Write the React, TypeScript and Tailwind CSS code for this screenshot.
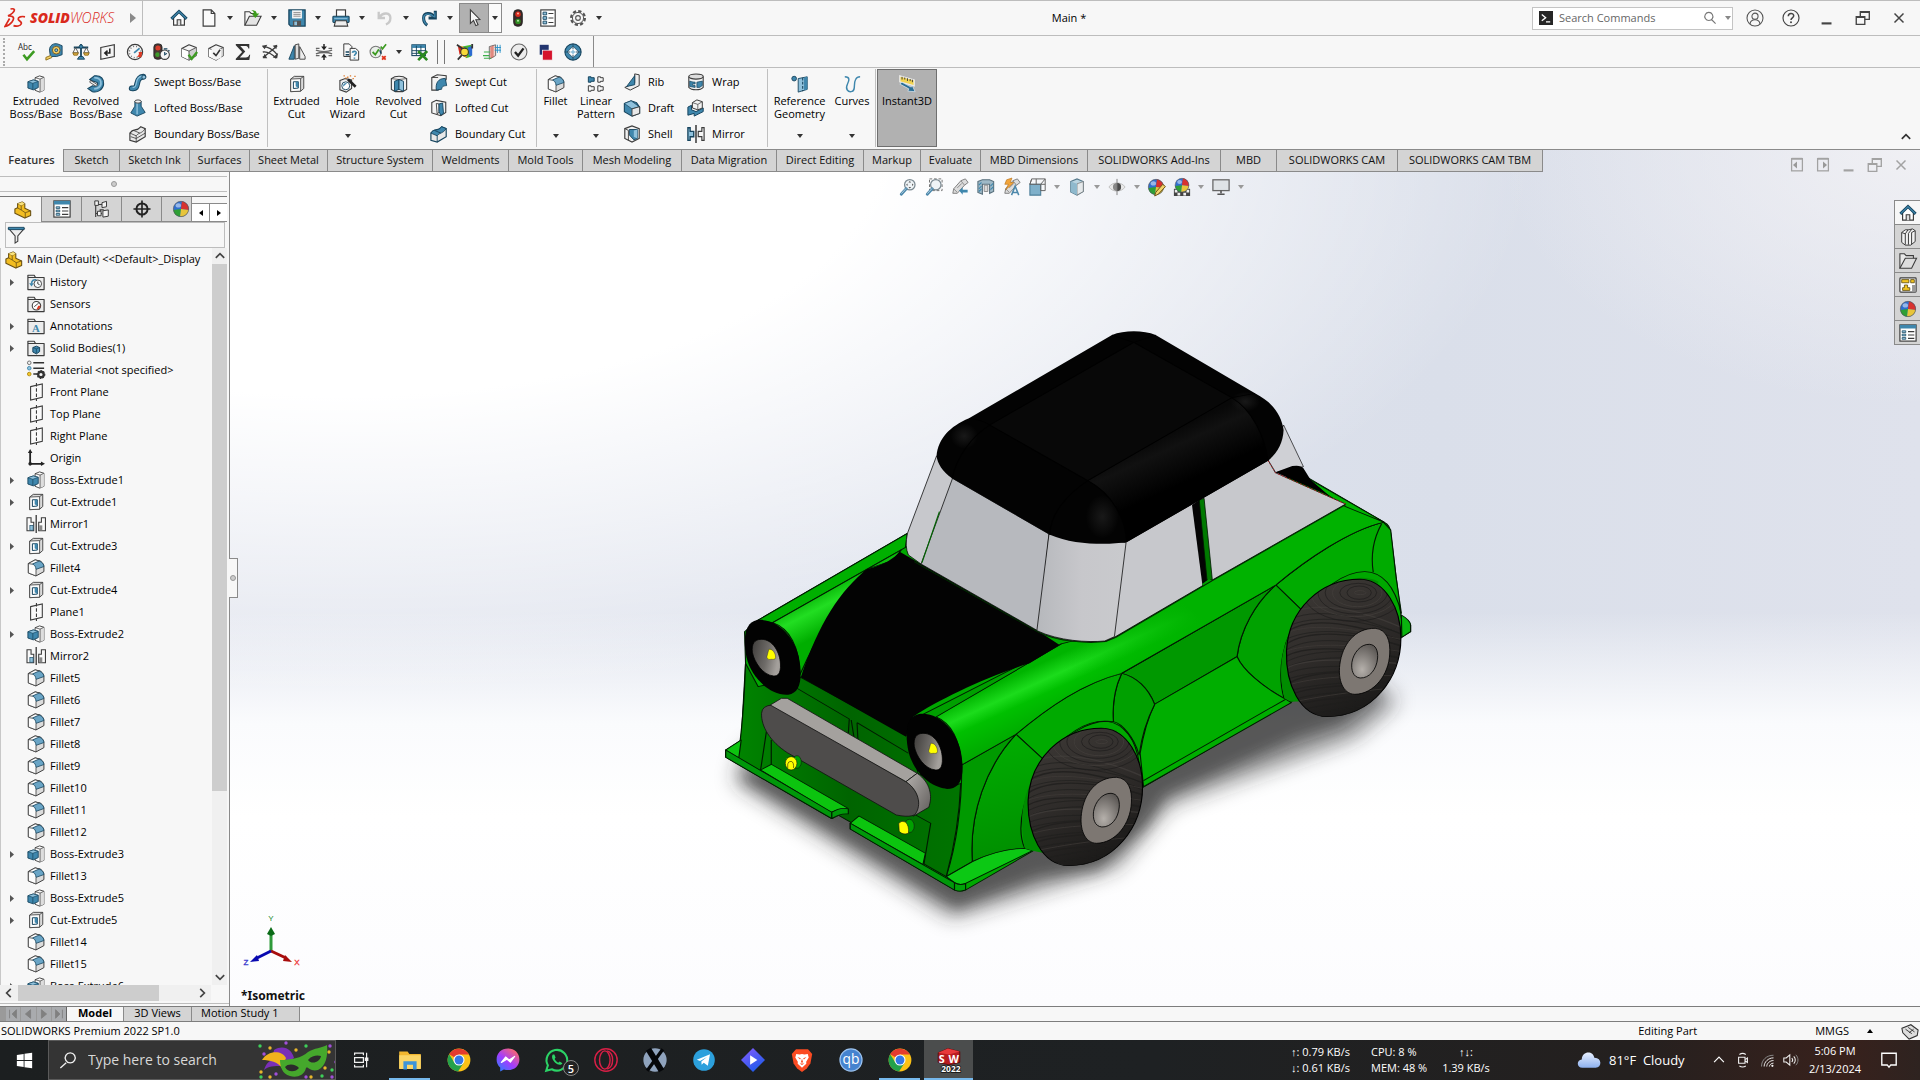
import React from "react";

type IconProps = { name: string; className?: string };

const B = "#3f87ad";
const L = "#8fc1dc";
const D = "#16445e";
const K = "#3c3c3c";

const cube = (
  <>
    <path d="M2 6 L10 2 L18 5 V14 L10 19 L2 15 Z" fill="#f4f4f4" stroke={K} strokeWidth="1.3" strokeLinejoin="round" />
    <path d="M2 6 L10 9 V19 L2 15 Z" fill="#fff" />
    <path d="M10 9 L18 5 V14 L10 19 Z" fill="#cfcfcf" />
    <path d="M2 6 L10 9 L18 5 M10 9 V19" fill="none" stroke={K} strokeWidth="0.9" />
  </>
);

const folder = (
  <path d="M1 18.4 V2.5 H8 L9.5 5 H19 V18.4 Z M1 5 H9.5" fill="#ececec" stroke={K} strokeWidth="1.3" strokeLinejoin="round" />
);

const sphere = (
  <>
    <circle cx="10" cy="10" r="8.5" fill="#2f6fd0" />
    <path d="M10 10 L11 1.5 A8.5 8.5 0 0 1 18.5 11 Z" fill="#d8322f" />
    <path d="M10 10 L1.6 11 A8.5 8.5 0 0 0 9 18.4 Z" fill="#2fa036" />
    <path d="M10 10 L18.5 11 A8.5 8.5 0 0 1 9 18.4 Z" fill="#e8c53a" />
    <ellipse cx="7" cy="6" rx="3" ry="2.4" fill="#fff" opacity="0.5" />
    <circle cx="10" cy="10" r="8.5" fill="none" stroke="#555" strokeWidth="0.7" />
  </>
);

const lens = (
  <>
    <circle cx="12" cy="7.5" r="5.8" fill="#eef3f6" stroke="#7c8a92" strokeWidth="1.4" />
    <path d="M8 12 L2.5 18" stroke="#4d88ab" strokeWidth="3.2" strokeLinecap="round" />
    <path d="M7.5 12 L3 17" stroke="#b5d4e4" strokeWidth="1" strokeLinecap="round" />
  </>
);

const torch = (
  <>
    <path d="M11 3 L16 1 L19 5 L15 8 L7 17 L2 17 L3 12 Z" fill="#dcdcdc" stroke="#777" strokeWidth="1" />
    <path d="M11 3 L15 8 M3 12 L7 16 M12 6 L7 11" stroke="#888" fill="none" />
  </>
);

const chrome = (
  <>
    <circle cx="10" cy="10" r="9.5" fill="#fbc116" />
    <path d="M10 10 L1.8 5.2 A9.5 9.5 0 0 1 18.3 5.5 L10 5.5 Z" fill="#e33b2e" />
    <path d="M1.8 5.2 A9.5 9.5 0 0 0 9.2 19.5 L13.9 12.2 L10 10 L6 11.8 Z" fill="#23a14b" />
    <circle cx="10" cy="10" r="4.6" fill="#fff" />
    <circle cx="10" cy="10" r="3.7" fill="#3477e4" />
  </>
);

const icons: Record<string, React.ReactNode> = {
  home: (
    <>
      <path d="M4 9 V18 H16 V9 L10 3 Z" fill="#fff" stroke={K} strokeWidth="1.3" />
      <path d="M8 18 V12 H12 V18" fill="#ddd" stroke={K} strokeWidth="1.2" />
      <path d="M1.5 11 L10 2.8 L18.5 11" fill="none" stroke={D} strokeWidth="3.2" />
      <path d="M1.8 10.7 L10 2.9 L18.2 10.7" fill="none" stroke={B} strokeWidth="1.4" />
    </>
  ),
  doc: <path d="M3.5 1 H12.5 L16.5 5 V19 H3.5 Z M12.5 1 V5 H16.5" fill="#fafafa" stroke={K} strokeWidth="1.3" />,
  open: (
    <>
      <path d="M1 18 V3 H6 L8 5 H13 V8" fill="#f4f4f4" stroke={K} strokeWidth="1.2" />
      <path d="M1 18 L6 8 H19 L14 18 Z" fill="#e4e4e4" stroke={K} strokeWidth="1.2" />
      <path d="M8 1 C12 1 14 3 14 5 H17 L12.5 10 L8.5 5 H11 C11 3 10 2 8 1 Z" fill="#3c9c1c" />
    </>
  ),
  save: (
    <>
      <path d="M1 1 H19 V19 H3 L1 17 Z" fill={B} stroke={D} strokeWidth="1.4" />
      <rect x="4.5" y="1.5" width="11" height="9" fill="#f4f4f4" />
      <path d="M6 4 H14 M6 6 H14 M6 8 H14" stroke="#888" />
      <rect x="5.5" y="13" width="9" height="6" fill="#555" />
      <rect x="7" y="14" width="3" height="4" fill={L} />
    </>
  ),
  print: (
    <>
      <rect x="5" y="1" width="10" height="9" fill="#fff" stroke={K} strokeWidth="1.3" />
      <rect x="1" y="8" width="18" height="7" rx="1" fill={B} stroke={D} strokeWidth="1.2" />
      <path d="M4 13 H16 L17.5 19 H2.5 Z" fill="#eee" stroke={K} strokeWidth="1.2" />
      <path d="M2.5 10.5 H17" stroke={L} />
    </>
  ),
  undo: <path d="M3 3 L3 10 L10 10 M4 9 C8 3 16 4 16 10 C16 14 14 16 11 17" fill="none" stroke="#c9c9c9" strokeWidth="2.6" />,
  redo: (
    <>
      <path d="M17 2 V10 H9.5 M16 9 C12 3 4 4 4 10 C4 14 5 16 8 18" fill="none" stroke={D} strokeWidth="3.4" />
      <path d="M16.5 3.5 V9.4 M15.5 8.8 C11.5 4 4 5 4 10 C4 14 5 15.5 7.4 17.2" fill="none" stroke={B} strokeWidth="1.5" />
    </>
  ),
  cursor: <path d="M6 1 L6 16 L9.5 12.7 L12 18.5 L14.5 17.4 L12 11.9 L16.5 11.6 Z" fill="#f6f6f6" stroke={K} strokeWidth="1.2" />,
  traffic: (
    <>
      <rect x="5.2" y="0.8" width="9.6" height="18.4" rx="4.2" fill="#3a2a28" stroke="#222" />
      <circle cx="10" cy="5.8" r="3" fill="#d92b1c" />
      <circle cx="10" cy="5" r="1.2" fill="#ffb0a0" />
      <circle cx="10" cy="13.8" r="3" fill="#2f8c22" />
      <circle cx="10" cy="13" r="1.1" fill="#b6e8a6" />
    </>
  ),
  list: (
    <>
      <rect x="2" y="1" width="16" height="18" fill="#fff" stroke={K} strokeWidth="1.3" />
      <path d="M4.5 3.5 h4 v3 h-4z M4.5 8.5 h4 v3 h-4z M4.5 13.5 h4 v3 h-4z" fill={L} stroke={D} />
      <path d="M10.5 5 H16 M10.5 10 H16 M10.5 15 H16" stroke={K} strokeWidth="1.2" />
    </>
  ),
  gear: (
    <>
      <circle cx="10" cy="10" r="7.6" fill="none" stroke="#555" strokeWidth="2.6" strokeDasharray="3.6 2.37" />
      <circle cx="10" cy="10" r="6.2" fill="#f7f7f7" stroke="#555" strokeWidth="1.1" />
      <circle cx="10" cy="10" r="2.6" fill="none" stroke="#555" strokeWidth="1.2" />
    </>
  ),
  spell: (
    <>
      <text x="0" y="8" fontSize="9" fill="#222" fontFamily="Open Sans, sans-serif">Abc</text>
      <path d="M6 13 L10 18 L18 9" fill="none" stroke="#3d9b22" strokeWidth="2.8" />
    </>
  ),
  tape: (
    <>
      <path d="M5 8 C5 2 10 0 14 1 L19 3 V13 L13 15 H6 Z" fill={B} stroke={D} />
      <circle cx="12.5" cy="8" r="4.3" fill="#f4cf63" stroke="#6b5320" />
      <circle cx="12.5" cy="8" r="1.6" fill={L} stroke={D} />
      <path d="M6 14 L1 16 V19 L8 16" fill="#f4cf63" stroke="#8a6a16" />
    </>
  ),
  scale: (
    <>
      <path d="M10 1 V16 M2 5 H18" stroke={D} strokeWidth="2" />
      <path d="M6 18 H14 L12 15 H8 Z" fill={B} stroke={D} />
      <circle cx="10" cy="4" r="2" fill={B} stroke={D} />
      <path d="M4 5 L1 11 H7 Z M16 5 L13 11 H19 Z" fill="none" stroke="#555" />
      <path d="M1 11 H7 L6 13.5 H2 Z M13 11 H19 L18 13.5 H14 Z" fill="#e7b54c" stroke="#8a6a16" />
    </>
  ),
  section: (
    <>
      <path d="M2 5 L17 2 V15 L2 18 Z" fill="#f4f4f4" stroke={K} strokeWidth="1.3" />
      <path d="M12 6 V11 H7 M9.5 8.5 L6.5 11.2 L9.5 14" fill="none" stroke="#222" strokeWidth="1.7" />
    </>
  ),
  gauge: (
    <>
      <circle cx="10" cy="10" r="8.4" fill="#f6f6f6" stroke={K} strokeWidth="1.4" />
      <circle cx="10" cy="10" r="6.2" fill="none" stroke="#666" strokeWidth="1.4" strokeDasharray="1 2.3" />
      <path d="M9 11 L15 6" stroke={B} strokeWidth="2" />
      <path d="M14 10 A4 4 0 0 1 12 15 L17 16 L18 10 Z" fill="#df3a24" />
    </>
  ),
  lightclock: (
    <>
      <rect x="1" y="1" width="9" height="17" rx="3.5" fill="#4a3632" stroke="#222" />
      <circle cx="5.5" cy="5.5" r="2.8" fill="#d93d2b" />
      <circle cx="5" cy="13" r="2.6" fill="#3e9a2b" />
      <circle cx="13" cy="13" r="5.2" fill="#f6f6f6" stroke={K} strokeWidth="1.2" />
      <path d="M13 10 V13 L15.5 11.5 M12 6.5 H16 M17 8 L18.5 9" stroke={D} strokeWidth="1.2" fill="none" />
    </>
  ),
  cubecheck: (
    <>
      {cube}
      <path d="M9.5 13 L13 17.5 L19 10" fill="none" stroke="#3d9b22" strokeWidth="2.6" />
    </>
  ),
  cubetick: (
    <>
      {cube}
      <path d="M5 6.5 H16 V16 L10 19 L5 16.5Z" fill="#f4f4f4" />
      <path d="M7 11 L10 14 L14.5 7.5" fill="none" stroke="#333" strokeWidth="1.8" />
    </>
  ),
  sigma: <path d="M2 1 H17 V6 H16 C15.5 4 14.5 3.4 12 3.4 H7 L12.5 9.5 L6.5 16 H13 C15.5 16 16.2 15 17 13 H18 L17 19 H2 V17.5 L9 10 L2 2.5 Z" fill="#333" />,
  zebra: (
    <>
      <path d="M2 4 C8 4 14 8 18 13 M2 10 C7 9 13 13 17 17 M18 3 C12 8 7 13 2 16" fill="none" stroke={K} strokeWidth="1.5" />
      <path d="M1 3 L7 2 L4 7 Z M18 2 L13 3 L17 7 Z M2 17 L4 12 L7 17 Z M19 11 L18 17 L13 16 Z" fill={K} />
    </>
  ),
  sym: (
    <>
      <path d="M1 18 L7 3 V18 Z" fill={B} stroke={D} />
      <path d="M8 2 L12 1 V17 L8 18 Z" fill="#ddd" stroke={K} />
      <path d="M13 18 V4 L19 15 V18 Z" fill="#eee" stroke={K} />
    </>
  ),
  thick: (
    <>
      <path d="M1 8 C6 10 14 10 19 8 M1 12 C6 10 14 10 19 12 M1 6 H5 M15 6 H19 M1 14 H5 M15 14 H19" fill="none" stroke="#666" strokeWidth="1.5" />
      <path d="M10 1 V5 M10 15 V19" stroke="#222" strokeWidth="1.6" />
      <path d="M6.8 4 H13.2 L10 8 Z M6.8 16 H13.2 L10 12 Z" fill="#222" />
    </>
  ),
  compare: (
    <>
      <path d="M2 1 H8 L11 4 V15 H2 Z" fill="#f8f8f8" stroke={K} strokeWidth="1.1" />
      <path d="M9 6 H15 L18.5 9 V19 H9 Z" fill="#f8f8f8" stroke={K} strokeWidth="1.1" />
      <path d="M4 10 H8 M4 13 H8" stroke={D} strokeWidth="1.6" />
      <path d="M11.5 10.8 C12 8.6 16 8.8 15.8 11 C15.6 12.5 13.8 12.4 13.8 14.4 M13.8 16 V17.5" fill="none" stroke={B} strokeWidth="1.8" />
    </>
  ),
  checkx: (
    <>
      <circle cx="7.5" cy="10" r="6.3" fill="#e9efe9" stroke="#777" strokeWidth="1.2" />
      <path d="M4 10 L7 13 L11 7" fill="none" stroke="#3d9b22" strokeWidth="2" />
      <path d="M13 4 L15 6.5 L19 1.5" fill="none" stroke="#3d9b22" strokeWidth="1.8" />
      <path d="M12 8 L13.5 12" stroke={D} strokeWidth="1.6" />
      <path d="M14.5 14.5 L18.5 18.5 M18.5 14.5 L14.5 18.5" stroke="#e0331c" strokeWidth="2" />
    </>
  ),
  xls: (
    <>
      <rect x="1" y="2" width="15" height="12" fill="#fff" stroke={D} strokeWidth="1.2" />
      <rect x="1" y="2" width="15" height="3.5" fill={B} />
      <path d="M1 8.5 H16 M1 11.5 H16 M6 3 V14 M11 3 V14" stroke={D} />
      <path d="M8 9 L18 19 M18 9 L8 19" stroke="#2a8a1e" strokeWidth="3" />
    </>
  ),
  rainbow: (
    <>
      <path d="M7 4 L17 2 V15 L11 17 Z" fill="#45b534" />
      <path d="M5 3 C9 4 12 7 12 16 L8 15 L5 8 Z" fill="#f59b1b" />
      <path d="M2 3 L7 5 L9 10 L4 13 Z" fill="#d32a1d" />
      <path d="M13 5 L18 3 V14 L15 15 Z" fill="#2b6bd0" />
      <circle cx="9.5" cy="10" r="4.3" fill="#f7d93a" stroke="#333" strokeWidth="1.2" />
      <path d="M6.5 13.5 L2 18.5 M1 2 L7 6 M18 1 V6" stroke="#333" strokeWidth="2" />
    </>
  ),
  flow: (
    <>
      <path d="M7 4 L14 2 V14 L7 18 Z" fill="#f2d4cf" stroke="#666" />
      <path d="M9 4 V17 M11 3 V16" stroke="#d24a3a" />
      <path d="M13 5 H20 M13 8 H20 M16 2 V11 M19 2 V11" stroke="#2790c7" />
      <path d="M1 10 H8 M0 14 H7 M1 17 H9" stroke="#3bb04a" strokeWidth="1.2" />
    </>
  ),
  okring: (
    <>
      <circle cx="10" cy="10" r="8.8" fill="#ececec" stroke="#666" strokeWidth="1.2" />
      <path d="M5.5 10 L9 14 L15 6" fill="none" stroke="#222" strokeWidth="2.6" />
    </>
  ),
  squares: (
    <>
      <rect x="3" y="2" width="10" height="11" fill="#23356f" />
      <rect x="6" y="8" width="11" height="11" fill="#d5132c" stroke="#f7f7f7" strokeWidth="0.8" />
    </>
  ),
  target: (
    <>
      <circle cx="10" cy="10" r="9" fill={B} stroke={D} strokeWidth="1.2" />
      <path d="M10 1 V19 M1 10 H19" stroke={D} strokeWidth="0.8" />
      <path d="M10 3.6 L16.4 10 L10 16.4 L3.6 10 Z" fill="#fff" stroke={D} strokeWidth="0.8" />
      <path d="M10 7.4 L12.6 10 L10 12.6 L7.4 10 Z" fill={L} />
      <path d="M10 3.6 V7 M10 13 V16.4 M3.6 10 H7 M13 10 H16.4" stroke={D} strokeWidth="1" />
    </>
  ),
  boss: (
    <>
      <path d="M9 3 L14 1 L18.8 2.5 V17 L14 19 L9 17 Z" fill="#fbfbfb" stroke={K} strokeWidth="1" />
      <path d="M14.5 4.2 L18.8 2.5 V17 L14.5 18.8 Z" fill="#dedede" />
      <path d="M14.5 4.5 V19 M9 3 L14.5 4.5 L18.8 2.5" fill="none" stroke={K} strokeWidth="0.8" />
      <path d="M1 7.5 L7 5.5 L12.5 7 V14 L7 16.5 L1 14.5 Z" fill={B} stroke={D} strokeWidth="1" />
      <path d="M1 7.5 L7 5.5 L12.5 7 L6.5 9.2 Z" fill={L} stroke={D} strokeWidth="0.7" />
      <path d="M6.5 9.2 V16.2" stroke={D} strokeWidth="0.8" />
    </>
  ),
  revolve: (
    <>
      <path d="M8 1 C16 0 19 5 18.5 10 C18 16 12 20 6 18.5 L1 15 L6 12 C9 13 12 11 12 9 C11 7 7 8 3 5 Z" fill={B} stroke={D} strokeWidth="1.2" />
      <path d="M8 3 C14 3 16 6 15.5 10 C15 13 12 15 8 15.5" fill="none" stroke={L} strokeWidth="2" />
      <path d="M4 6 L12 11 L10 12.5 L3 8 Z" fill="#f4f4f4" stroke={K} strokeWidth="0.9" />
    </>
  ),
  sweep: (
    <>
      <path d="M3 17 C13 19 5 5 16 4" fill="none" stroke={D} strokeWidth="6.4" strokeLinecap="round" />
      <path d="M3 17 C13 19 5 5 16 4" fill="none" stroke={B} strokeWidth="4.2" strokeLinecap="round" />
      <path d="M4 16 C11 17 5 5 14 3.5" fill="none" stroke={L} strokeWidth="1.3" />
      <circle cx="16.5" cy="4.6" r="2.2" fill={L} stroke={D} />
    </>
  ),
  loft: (
    <>
      <path d="M6.5 2.5 V8 L2 15.5 L9 19 L18 15 L13.5 8 V2.5 Z" fill={B} stroke={D} strokeWidth="1" />
      <path d="M9 4 V17" stroke={L} strokeWidth="1.6" />
      <ellipse cx="10" cy="2.8" rx="3.5" ry="1.8" fill="#f2f2f2" stroke={K} />
    </>
  ),
  boundary: (
    <>
      <path d="M1 9 C5 3 8 8 13 2 L18 4 V13 L8 19 L1 17 Z" fill="#e8e8e8" stroke={K} strokeWidth="1.3" />
      <path d="M1 9 L8 12 C11 8 14 10 18 4 M8 12 V19 M5 6 L12 9 M2 13 L8 15 L18 9" fill="none" stroke={K} strokeWidth="0.9" />
    </>
  ),
  boundarycut: (
    <>
      <path d="M1 9 C5 3 8 8 13 2 L18 4 V13 L8 19 L1 17 Z" fill="#e8e8e8" stroke={D} strokeWidth="1.3" />
      <path d="M1 9 C5 3 8 8 13 2 L18 4 C14 10 11 8 8 12 Z" fill={B} stroke={D} />
      <path d="M8 12 V19 M5 6 L12 9" fill="none" stroke={D} />
    </>
  ),
  cut: (
    <>
      <path d="M3 4.5 L7 1.5 L17.5 1.5 V15 L14 18 L3 18.5 Z" fill="#dadada" stroke={K} strokeWidth="1" />
      <path d="M3 4.5 L14 4 V18 L3 18.5 Z" fill="#fbfbfb" stroke={K} strokeWidth="0.9" />
      <path d="M14 4 L17.5 1.5" stroke={K} strokeWidth="0.9" />
      <path d="M6 7.5 H11.5 V14.5 L6 15 Z" fill="#fff" stroke={D} strokeWidth="1.1" />
      <path d="M8.5 7.5 H11.5 V14.5 L8.5 12.5 Z" fill={B} />
    </>
  ),
  hole: (
    <>
      <path d="M1 6 L7 4 L14 5.5 V15 L8 19 L1 16.5 Z" fill="#eee" stroke={K} strokeWidth="1.2" />
      <circle cx="7.5" cy="12" r="4.4" fill="#fff" stroke={D} />
      <path d="M4.6 13 A3.4 3.4 0 0 1 9 9 Z" fill={B} />
      <path d="M10 5 L18.5 13" stroke="#222" strokeWidth="3" />
      <path d="M5 1 h1.5 M9 2.5 h1.5 M12 1 h1.5 M15 4 h1.5 M7 3.5 h1.5 M17 1.5 h1.5" stroke="#dd7b2d" strokeWidth="1.6" />
    </>
  ),
  revcut: (
    <>
      <path d="M1.5 4 C6 0.5 14 0.5 18.5 4 V16 L14 18.5 H6 L1.5 16 Z" fill="#f2f2f2" stroke={K} strokeWidth="1.2" />
      <path d="M5 7 L10 5 V16 L5 18 Z" fill={B} stroke={D} />
      <path d="M10 5 L15 7 V18 L10 16 Z" fill={L} stroke={D} />
      <path d="M1.5 4 L10 5 L18.5 4" fill="none" stroke={K} strokeWidth="0.8" />
    </>
  ),
  sweepcut: (
    <>
      <path d="M2 5 L8 2 L18 3 V7 L9 19 H2 Z" fill="#f2f2f2" stroke={K} strokeWidth="1.2" />
      <path d="M7 19 C6 11 9 6 17 6 L18.5 14 C14 14 13 16 13 18 Z" fill={B} stroke={D} />
      <path d="M2 5 H9" stroke={K} />
    </>
  ),
  loftcut: (
    <>
      <path d="M2 4 L7 1.5 L17.5 3.5 V15 L12 18.5 L2 15.5 Z" fill="#f2f2f2" stroke={K} strokeWidth="1.2" />
      <path d="M7 5 L10 5.5 V14 L8 17 Z" fill="#fff" stroke={K} />
      <path d="M10 5.5 L14 4.5 L15 16 L12 18 L10 14 Z" fill={B} stroke={D} />
    </>
  ),
  fillet: (
    <>
      <path d="M1.5 5 L9 1 L15 2.4 C18 4.5 18.8 7 18.8 9 V14 L10 18.8 L1.5 15.5 Z" fill="#dcdcdc" stroke={K} strokeWidth="1.1" strokeLinejoin="round" />
      <path d="M1.5 5 L9 1 L14 2.2 L6 5.8 C9 7 9.8 9 10 11.5 V18.8 L1.5 15.5 Z" fill="#fcfcfc" />
      <path d="M10 11.5 C9.6 8 8.6 6.6 6 5.6 L13.6 2.2 C17 3.6 18.8 6 18.8 8.4 Z" fill="#6aa5c6" stroke={D} strokeWidth="0.9" />
      <path d="M1.5 5 L6 5.8 M10 11.5 V18.8 M1.5 5 V15.5 L10 18.8 M1.5 5 L9 1 L14 2.2" fill="none" stroke={K} strokeWidth="0.9" />
    </>
  ),
  pattern: (
    <>
      <path d="M1.5 2 V8 H4.5 V7 L8 7 V3 H4.5 V2 Z" fill={B} stroke={D} strokeWidth="1.1" />
      <path d="M12 2 V8 H15 V7 H18 V3 H15 V2 Z M1.5 12 V18 H4.5 V17 H8 V13 H4.5 V12 Z M12 12 V18 H15 V17 H18 V13 H15 V12 Z" fill="#f6f6f6" stroke={K} strokeWidth="1.1" />
    </>
  ),
  rib: (
    <>
      <path d="M13 1 L18 2 V14 L8 19 L2 16 L13 11 Z" fill="#eee" stroke={K} strokeWidth="1.1" />
      <path d="M13 3 V13 L4 15 Z" fill={B} stroke={D} />
    </>
  ),
  draft: (
    <>
      <path d="M1.5 5 L9 2 L15 4 L18.5 9 V16 L10 19 L1.5 14 Z" fill={B} stroke={D} strokeWidth="1.2" />
      <path d="M1.5 5 L9 2 L18 8.5 L10 11 Z" fill={L} stroke={D} strokeWidth="0.8" />
      <path d="M10 11 L18.5 8.5 V16 L10 19 Z" fill="#e8e8e8" stroke={K} />
    </>
  ),
  shell: (
    <>
      <path d="M2 4 L10 1 L18 4 V15 L10 19 L2 15 Z" fill="#f2f2f2" stroke={K} strokeWidth="1.3" />
      <path d="M7 5 L16 5 V15 L12 16.5 L7 11 Z" fill={B} stroke={D} />
      <path d="M12 6 L16 5 V15 L12 13Z" fill={L} />
      <path d="M2 4 L6 6 V17" fill="none" stroke={K} />
    </>
  ),
  wrap: (
    <>
      <path d="M2 4 V16 C5 19.5 15 19.5 18 16 V4" fill="#f2f2f2" stroke={K} strokeWidth="1.2" />
      <ellipse cx="10" cy="4" rx="8" ry="2.8" fill="#ddd" stroke={K} strokeWidth="1.2" />
      <path d="M3 9 C6 10 6 10 9 10.2 V12.2 L6 12 V13.5 L9 14 V16 L3 15 Z M11 10.2 L17 9 V14 L14 16 L11 16 Z" fill={B} stroke={D} strokeWidth="0.8" />
    </>
  ),
  intersect: (
    <>
      <path d="M1 9 L5 7 V12 L10 14 L18 10 V14 L8 19 V16 L1 18 Z" fill={B} stroke={D} strokeWidth="1.1" />
      <path d="M6 4 L11 1 L17 3 V10 L12 12 L6 10 Z" fill="#f2f2f2" stroke={K} strokeWidth="1.1" />
      <path d="M6 4 L12 6 L17 3 M12 6 V12" fill="none" stroke={K} strokeWidth="0.8" />
    </>
  ),
  mirror: (
    <>
      <path d="M1 3 V17 H3.5 V13 H7.5 V7 H3.5 V3 Z" fill={L} stroke={D} strokeWidth="1.5" />
      <path d="M10 0 V20" stroke="#222" strokeWidth="1.5" />
      <path d="M19 3 V17 H16.5 V13 H12.5 V7 H16.5 V3 Z" fill="#f4f4f4" stroke={K} strokeWidth="1.3" />
    </>
  ),
  mirrorfeat: (
    <>
      <path d="M0 3 V17.5 H7.5 V8 H4.5 V3 Z" fill="#fafafa" stroke={K} strokeWidth="1.2" />
      <rect x="3.2" y="11.5" width="3.6" height="5.4" fill={L} stroke={D} strokeWidth="0.7" />
      <path d="M10.2 0 V20" stroke="#222" strokeWidth="1.3" />
      <path d="M20.5 3 V17.5 H13 V8 H16 V3 Z" fill="#fafafa" stroke={K} strokeWidth="1.2" />
      <rect x="13.6" y="11.5" width="3.4" height="5.4" fill="#888" />
    </>
  ),
  refgeo: (
    <>
      <circle cx="3.5" cy="4" r="2.6" fill={B} stroke={D} />
      <path d="M8 4 L18 2 V16 L8 19 Z" fill={L} stroke={D} strokeWidth="1" />
      <path d="M13 3 V18" stroke={D} strokeWidth="1.2" strokeDasharray="3 1.6" />
      <path d="M14.5 3 L18 2 V16 L14.5 17Z" fill={B} />
    </>
  ),
  curves: (
    <path d="M2 2 C8 2 7 6 5 10 C2 16 6 19 9 18.5 C15 18 11 10 14 5 C15 3 17 2 19 2" fill="none" stroke={B} strokeWidth="1.6" />
  ),
  instant: (
    <>
      <path d="M2 1 L18 5.5 V12 L2 7.5 Z" fill="#f3d552" stroke="#ececec" strokeWidth="1.4" />
      <path d="M4.5 2 V5 M7.5 2.8 V5 M10.5 3.6 V6.6 M13.5 4.5 V6.8 M16 5.2 V8" stroke="#333" />
      <path d="M2 10 L12 15.4 L11 18 L19 18.5 L16 12 L14.6 13.4 L4.4 8 Z" fill="#2a6f97" stroke="#dfe8ee" strokeWidth="0.8" />
    </>
  ),
  part: (
    <>
      <path d="M1 9 L4 7.5 V3 L9 1 L12 3 V8 L18.5 11 V16 L12 19 L1 13.5 Z" fill="#f2bd22" stroke="#6b5214" strokeWidth="1.2" strokeLinejoin="round" />
      <path d="M4 3 L8 5 L12 3 M8 5 V10 L12.5 13 L18.5 11 M12.5 13 V19 M8 10 L4 7.6" fill="none" stroke="#6b5214" strokeWidth="0.9" />
      <path d="M4 3 L9 1 L12 3 L8 5Z" fill="#f9e27d" />
    </>
  ),
  proplist: (
    <>
      <rect x="1" y="1" width="18" height="18" fill="#fff" stroke={K} strokeWidth="1.3" />
      <rect x="1" y="1" width="18" height="4" fill={B} />
      <path d="M3.5 7.5 h4 v2 h-4z M3.5 11.2 h4 v2 h-4z M3.5 15 h4 v2 h-4z" fill={L} stroke={D} strokeWidth="0.8" />
      <path d="M10 8.5 H17 M10 12.2 H17 M10 16 H17" stroke={K} strokeWidth="1.2" />
    </>
  ),
  config: (
    <>
      <path d="M3 1 V19 M3 5 H11 M3 15 H10 M8 15 V11 H12" fill="none" stroke={K} strokeWidth="1.3" />
      <path d="M2 1 H6 V6 H2 Z M10 3 L15 1.5 V7.5 L10 8.5 Z M11 12 L17 11 V18 L11 19 Z M5 12.5 H9 V17.5 H5 Z" fill="#f4f4f4" stroke={K} strokeWidth="1.1" />
    </>
  ),
  dim: (
    <>
      <circle cx="10" cy="10" r="6.2" fill="none" stroke="#222" strokeWidth="2.2" />
      <path d="M10 0.5 V19.5 M0.5 10 H19.5" stroke="#222" strokeWidth="1.8" />
    </>
  ),
  appear: sphere,
  filter: (
    <>
      <path d="M2 3 L9 11 V19 L12 17 V11 L19 3 Z" fill="#eee" stroke={K} strokeWidth="1.2" />
      <path d="M1.5 1.5 H19 V4 H1.5 Z" fill={B} stroke={D} />
    </>
  ),
  history: (
    <>
      {folder}
      <circle cx="12" cy="12" r="4.2" fill="#f6fafc" stroke={K} />
      <path d="M12 9.5 V12 L14 13" fill="none" stroke={K} strokeWidth="1.1" />
      <path d="M5 12 C5 8 8 7 10.5 7.6" fill="none" stroke={B} strokeWidth="1.7" />
      <path d="M2.4 11.4 H7.6 L5 15 Z" fill={B} />
    </>
  ),
  sensors: (
    <>
      {folder}
      <circle cx="10.5" cy="12" r="4.7" fill="#fff" stroke={K} strokeWidth="1.2" />
      <path d="M8 13 L13 9" stroke={K} />
      <path d="M12.5 12 L15 12 C15 15 12 16.5 10.5 16 Z" fill="#dd3a22" />
    </>
  ),
  annot: (
    <>
      {folder}
      <text x="5.5" y="16.6" fontSize="12" fontWeight="bold" fontFamily="Liberation Serif, serif" fill={B}>A</text>
    </>
  ),
  solid: (
    <>
      {folder}
      <path d="M6.5 9.5 L10.5 8 L14 9.5 V14 L10.5 16.5 L6.5 14.5 Z" fill={B} stroke={D} strokeWidth="1.1" />
      <path d="M6.5 9.5 L10.4 11 L14 9.5 M10.4 11 V16" fill="none" stroke={D} strokeWidth="0.8" />
    </>
  ),
  material: (
    <>
      <path d="M7 2 H19 M7 8 H19 M7 14.5 H12" stroke="#333" strokeWidth="1.6" />
      <circle cx="2.5" cy="2" r="2" fill="#eee" stroke="#666" />
      <circle cx="2.5" cy="8" r="2" fill={L} stroke={B} />
      <circle cx="2.5" cy="14.5" r="2" fill="#f4c62a" stroke="#b08a10" />
      <circle cx="15.5" cy="15" r="3.1" fill="none" stroke="#333" strokeWidth="2.6" />
      <circle cx="15.5" cy="15" r="4.3" fill="none" stroke="#333" strokeWidth="1.2" strokeDasharray="1.6 1.6" />
    </>
  ),
  plane: (
    <>
      <path d="M4 4 L17 1 V16 L4 19 Z" fill="#fafafa" stroke={K} strokeWidth="1.2" />
      <path d="M10.5 0 V20" stroke={K} strokeWidth="1.2" strokeDasharray="4 1.8" />
    </>
  ),
  origin: (
    <>
      <path d="M3.5 3 V16.5 H17" fill="none" stroke="#222" strokeWidth="2" />
      <path d="M3.5 0 L6 4.5 H1 Z M20 16.5 L15.5 14 V19 Z" fill="#222" />
      <circle cx="3.5" cy="16.5" r="2" fill="#222" />
    </>
  ),
  zoomfit: (
    <>
      {lens}
      <path d="M12 3.4 L13.5 5 H10.5 Z M12 11.6 L13.5 10 H10.5 Z M7.9 7.5 L9.5 6 V9 Z M16.1 7.5 L14.5 6 V9 Z" fill="#555" />
    </>
  ),
  zoomarea: (
    <>
      <rect x="5" y="1" width="14" height="13" fill="none" stroke="#666" strokeDasharray="3 2" />
      {lens}
    </>
  ),
  prev: (
    <>
      {torch}
      <path d="M9 14 L13 10.5 V13 H18.5 V16 H13 V18.5 Z" fill={B} />
    </>
  ),
  sectionview: (
    <>
      <path d="M1 4 L6 2 H14 L18.5 4 V15 L14 17 V7 H6 V18 L1 16 Z" fill="#9fb9c7" stroke="#59707d" strokeWidth="1.2" />
      <path d="M2 8 L5 5 M2 12 L5 9 M2 15 L5 12 M15 9 L18 6 M15 13 L18 10" stroke={B} strokeWidth="1.2" />
      <path d="M8 8 H12 V15 H8 Z" fill="#d9d9d9" stroke="#888" />
    </>
  ),
  annotview: (
    <>
      {torch}
      <path d="M4 2 L10 0 L8 5 L12 5 L3 13 L6 7 L2 7 Z" fill="#f3a53a" stroke="#b8731c" strokeWidth="0.7" />
      <path d="M9.5 19 L13.5 9 L17.5 19 M11 16 H16" fill="none" stroke="#4d88ab" strokeWidth="1.7" />
    </>
  ),
  orient: (
    <>
      <path d="M1 7 H13 V19 H1 Z" fill="#7fb0ca" stroke="#4d7f99" strokeWidth="1.2" />
      <path d="M3 1 H18 V14 H13 V7 H1 Z M3 1 L1 7 M8 1 V7 M18 1 L13 7 M18 7 H13" fill="none" stroke="#666" strokeWidth="1.1" />
    </>
  ),
  display: (
    <>
      <path d="M3 4 L10 1 L17 4 V15 L10 19 L3 15.5 Z" fill="#b9d4e1" stroke="#55788a" strokeWidth="1.2" />
      <path d="M10 6.5 L17 4 V15 L10 19 Z" fill="#e5e9eb" stroke="#777" strokeWidth="0.8" />
      <path d="M3 4 L10 6.5 L10 19 L3 15.5Z" fill="#8fb9cd" />
    </>
  ),
  eye: (
    <>
      <path d="M1 10 C5 4 15 4 19 10 C15 16 5 16 1 10 Z" fill="#e9e9e9" stroke="#bbb" />
      <circle cx="10" cy="10" r="4.5" fill="#888" />
      <path d="M10 5.5 A4.5 4.5 0 0 1 10 14.5 Z" fill="#4a4a4a" />
      <path d="M10 1 V19" stroke="#777" />
    </>
  ),
  editapp: (
    <>
      {sphere}
      <path d="M20.5 9.5 L12.5 18 L8.5 20 L9.8 15.8 L17.5 7 Z" fill="#f3d36a" stroke="#6b5518" strokeWidth="1.1" />
    </>
  ),
  scene: (
    <>
      <path d="M1 12 H19 V20 H1 Z" fill="#444" />
      <path d="M2 13 h3 v3 h-3z M15 13 h3 v3 h-3z M5 16.5 h3 v3 h-3z M11.5 16.5 h3 v3 h-3z" fill="#eee" />
      <g transform="translate(1 -1) scale(.9)">{sphere}</g>
    </>
  ),
  monitor: (
    <>
      <rect x="1" y="2" width="18" height="12" fill="#dfe3e6" stroke="#666" strokeWidth="1.4" />
      <path d="M10 14 V17 M6 18 H14" stroke="#555" strokeWidth="1.8" />
    </>
  ),
  user: (
    <>
      <circle cx="10" cy="10" r="8.9" fill="none" stroke="#555" strokeWidth="1.2" />
      <circle cx="10" cy="8" r="3.4" fill="none" stroke="#555" strokeWidth="1.2" />
      <path d="M4.5 16.5 C5 12.5 8 12 10 12 C12 12 15 12.5 15.5 16.5" fill="none" stroke="#555" strokeWidth="1.2" />
    </>
  ),
  help: (
    <>
      <circle cx="10" cy="10" r="8.9" fill="none" stroke="#444" strokeWidth="1.3" />
      <path d="M7 8 C7 4 13 4 13 7.6 C13 10 10 9.6 10 12.3" fill="none" stroke="#444" strokeWidth="1.7" />
      <circle cx="10" cy="14.8" r="1.1" fill="#444" />
    </>
  ),
  min: <path d="M4 16 H15" stroke="currentColor" strokeWidth="2.4" />,
  restore: (
    <path d="M2.5 8.5 H12 V17 H2.5 Z M2.5 9.3 H12 M7 8 V3 H17 V11.5 H12.5 M7 3.8 H17" fill="none" stroke="currentColor" strokeWidth="1.5" />
  ),
  close: <path d="M5 5 L15 15 M15 5 L5 15" stroke="currentColor" strokeWidth="1.6" />,
  paneleft: (
    <>
      <rect x="4" y="3" width="12" height="13.5" fill="none" stroke="#a2a2a2" strokeWidth="1.4" />
      <path d="M10 6 V14 L5.5 10 Z" fill="#999" />
      <path d="M4 3 H16" stroke="#a2a2a2" strokeWidth="2" />
    </>
  ),
  paneright: (
    <>
      <rect x="4" y="3" width="12" height="13.5" fill="none" stroke="#a2a2a2" strokeWidth="1.4" />
      <path d="M10 6 V14 L14.5 10 Z" fill="#999" />
      <path d="M4 3 H16" stroke="#a2a2a2" strokeWidth="2" />
    </>
  ),
  library: (
    <>
      <path d="M3 5 L7 2 L11 2 L15 1 L18 3 V15 L13 19 H7 L3 16 Z" fill="#f2f2f2" stroke={K} strokeWidth="1.1" />
      <path d="M7 6.5 V18.5 M10.5 6 V18.5 M14 5 V18 M3 5 L7 6.5 L10 2 M10.5 6 L14 1.6 M14 5 L18 3" fill="none" stroke={K} strokeWidth="1.1" />
    </>
  ),
  explorer: (
    <>
      <path d="M1 18 V2 H6 L8 4 H16 V8" fill="#e8e8e8" stroke={K} strokeWidth="1.2" />
      <path d="M1 18 L7 7 H19.5 L14 18 Z" fill="#ddd" stroke={K} strokeWidth="1.2" />
    </>
  ),
  palette: (
    <>
      <rect x="1" y="2" width="18" height="16" rx="1" fill="#fff" stroke={K} strokeWidth="1.3" />
      <path d="M3 4 h8 v3.5 h-8z M13 4 h4 v3.5 h-4z M6 10 h3.5 v3 h2.5 v3 h-8 v-3 h2z" fill="#f2c522" stroke="#5d4b10" strokeWidth="0.9" />
      <rect x="14.5" y="10" width="4" height="8" fill="#999" />
    </>
  ),
  tag: (
    <>
      <path d="M1 7 L11 3 L19 9 L18 15 L9 19 L2 12 Z" fill="#ddd" stroke="#333" strokeWidth="1.2" />
      <path d="M5 8 L12 13 M8 6 L15 11 M9 12 L14 8" stroke="#333" />
    </>
  ),
  chrome,
  folderTask: (
    <>
      <path d="M1 3 H8 L9.5 5 H19 V17 H1 Z" fill="#f3b72f" />
      <path d="M1 6 H19 V17.5 H1 Z" fill="#fcd667" />
      <path d="M4.5 18 V11 H15.5 V18 H12.5 V14 H7.5 V18 Z" fill="#3e94d8" />
    </>
  ),
  messenger: (
    <>
      <defs>
        <linearGradient id="msg" x1="0" y1="1" x2="0.8" y2="0">
          <stop offset="0" stopColor="#1a86ff" />
          <stop offset="0.5" stopColor="#a23cff" />
          <stop offset="1" stopColor="#ff6a68" />
        </linearGradient>
      </defs>
      <path d="M10 0.5 C4.5 0.5 0.5 4.4 0.5 9.5 C0.5 12.3 1.6 14.6 3.5 16.3 V19.5 L6.6 17.9 C7.7 18.2 8.8 18.4 10 18.4 C15.5 18.4 19.5 14.6 19.5 9.5 C19.5 4.4 15.5 0.5 10 0.5 Z" fill="url(#msg)" />
      <path d="M4.5 12 L8 7.5 L11 10 L15.5 7 L12 11.8 L9 9.3 Z" fill="#fff" stroke="#fff" strokeLinejoin="round" />
    </>
  ),
  whatsapp: (
    <>
      <path d="M1 19 L2.4 14.4 A8.6 8.6 0 1 1 5.7 17.7 Z" fill="none" stroke="#2bd366" strokeWidth="1.7" />
      <path d="M6.5 5.5 C5 7.5 6.5 10.5 8.5 12.3 C10.5 14 13.3 14.8 14.5 12.7 L12.2 11.2 L11 12.2 C9.6 11.6 8.6 10.5 8 9.2 L8.8 8 L7.8 5.5 Z" fill="#2bd366" />
    </>
  ),
  opera: (
    <>
      <circle cx="10" cy="10" r="9.3" fill="none" stroke="#d81f46" strokeWidth="1.2" />
      <ellipse cx="9" cy="10" rx="4.4" ry="7.6" fill="none" stroke="#d81f46" strokeWidth="1.2" />
      <path d="M11 2.4 C17 4.4 17 15.6 11 17.6" fill="none" stroke="#d81f46" strokeWidth="1.2" />
    </>
  ),
  xapp: (
    <>
      <circle cx="10" cy="10" r="9.7" fill="#8fa3bd" />
      <path d="M4.5 1 L15.5 19" stroke="#05070a" strokeWidth="5" />
      <path d="M16.5 1 L3.5 19" stroke="#05070a" strokeWidth="2.8" />
    </>
  ),
  telegram: (
    <>
      <circle cx="10" cy="10" r="9" fill="#2ca0dc" />
      <path d="M4 9.8 L15 5.3 L13.2 14.8 L9.8 12.3 L8 14 L7.8 11.3 L12.5 7.6 L6.7 10.9 Z" fill="#fff" />
    </>
  ),
  clip: (
    <>
      <defs>
        <linearGradient id="clp" x1="0" y1="0" x2="0.6" y2="1">
          <stop offset="0" stopColor="#8a5bff" />
          <stop offset="1" stopColor="#1f5bea" />
        </linearGradient>
      </defs>
      <path d="M10 0 L20 10 L10 20 L0 10 Z" fill="url(#clp)" />
      <path d="M7.6 6 L13.6 10 L7.6 14 Z" fill="#fff" />
    </>
  ),
  brave: (
    <>
      <path d="M5 1 H15 L18.5 5 L17 13 L14 17 L10 20 L6 17 L3 13 L1.5 5 Z" fill="#fb4b22" />
      <path d="M5.2 5 L8 5.4 L10 5 L12 5.4 L14.8 5 L15.6 8 L13.5 11.5 L13.6 13.2 L10 16.4 L6.4 13.2 L6.5 11.5 L4.4 8 Z" fill="#fff" />
      <path d="M6.2 7.5 L9 8.6 L8.4 9.6 Z M13.8 7.5 L11 8.6 L11.6 9.6 Z M10 9 L11 12 H9 Z M8 13 L10 14.2 L12 13" fill="#fb4b22" />
    </>
  ),
  qb: (
    <>
      <circle cx="10" cy="10" r="9.2" fill="#4583cf" stroke="#9cc3f0" />
      <text x="10" y="13.6" fontSize="11.5" textAnchor="middle" fill="#fff" fontFamily="Open Sans, sans-serif">qb</text>
    </>
  ),
  sw: (
    <>
      <path d="M1 4 L9 0.5 L19 3 V12 L10 14 L1 12 Z" fill="#b81d20" stroke="#5c0d0f" strokeWidth="0.8" />
      <path d="M1 4 L9 0.5 L19 3 L10 5.4 Z" fill="#e8393b" />
      <text x="1.4" y="12.5" fontSize="9" fontWeight="bold" fill="#fff" fontFamily="Open Sans, sans-serif">S</text>
      <text x="9.6" y="12.5" fontSize="9" fontWeight="bold" fill="#fff" fontFamily="Open Sans, sans-serif">W</text>
      <text x="3.6" y="19.8" fontSize="7" fontWeight="bold" fill="#fff" stroke="#111" strokeWidth="1.2" paintOrder="stroke" fontFamily="Open Sans, sans-serif">2022</text>
    </>
  ),
  taskview: (
    <path d="M2 4 V1.5 H13 V4 M2 7 H13 V13 H2 Z M2 16 V18.5 H13 V16 M17 1 V19 M15.5 7.5 H18.5 V10.5 H15.5 Z" fill="none" stroke="#f0f0f0" strokeWidth="1.5" />
  ),
  windows: <path d="M1 3.5 L9 2.4 V9.5 H1 Z M10 2.2 L19 1 V9.5 H10 Z M1 10.5 H9 V17.6 L1 16.5 Z M10 10.5 H19 V19 L10 17.8 Z" fill="#fff" />,
  search: <path d="M8 13 L1.5 19 M12.5 2 A5.6 5.6 0 1 1 12.4 2 Z" fill="none" stroke="currentColor" strokeWidth="1.5" />,
  magnify: <path d="M12.5 12.5 L18 18 M8.4 2 A5.8 5.8 0 1 1 8.3 2 Z" fill="none" stroke="#777" strokeWidth="1.6" />,
  prompt: (
    <>
      <rect width="20" height="20" fill="#262626" />
      <path d="M4 5 L9.5 9.5 L4 14 M10 15.5 H16" fill="none" stroke="#fff" strokeWidth="1.9" />
    </>
  ),
  cloud: (
    <>
      <defs>
        <linearGradient id="cl" x1="0" y1="0" x2="0" y2="1">
          <stop offset="0" stopColor="#e8f0ff" />
          <stop offset="1" stopColor="#8db0ee" />
        </linearGradient>
      </defs>
      <path d="M4.5 16.5 C-0.5 16.5 -0.5 10 4 9.6 C4 2.5 13.5 1.8 14.4 8.2 C21 8 21 16.5 15.5 16.5 Z" fill="url(#cl)" />
    </>
  ),
  chevup: <path d="M3 13 L10 6 L17 13" fill="none" stroke="currentColor" strokeWidth="1.7" />,
  chevbold: <path d="M3 13 L10 6 L17 13" fill="none" stroke="currentColor" strokeWidth="2.8" />,
  meet: (
    <path d="M4.5 6.5 H12.5 V14 H4.5 Z M12.5 9.5 L15.5 7.5 V13 L12.5 11 M5.5 3 C8 1.5 11 1.5 13.5 3 M5.5 17.5 C8 19 11 19 13.5 17.5" fill="none" stroke="#f0f0f0" strokeWidth="1.4" />
  ),
  wifi: (
    <>
      <path d="M2 18 C2 9 9 3 18 3" fill="none" stroke="#888" strokeWidth="1.3" />
      <path d="M5.5 18 C5.5 12 11 6.5 18 6.5 M9 18 C9 14 13 10 18 10 M12.5 18 C12.5 16 15 13.5 18 13.5" fill="none" stroke="#f0f0f0" strokeWidth="1.3" />
      <circle cx="16.5" cy="17" r="1.5" fill="#f0f0f0" />
    </>
  ),
  speaker: (
    <>
      <path d="M1 7.5 H4 L8.5 3.5 V16.5 L4 12.5 H1 Z M11 7.5 C12.4 9 12.4 11 11 12.5 M13.4 5.5 C16 8 16 12 13.4 14.5" fill="none" stroke="#f0f0f0" strokeWidth="1.3" />
      <path d="M16 3.5 C19.6 7 19.6 13 16 16.5" fill="none" stroke="#888" strokeWidth="1.2" />
    </>
  ),
  notify: <path d="M2 2.5 H18 V15.5 H12 L10 18 L8 15.5 H2 Z" fill="none" stroke="#fff" strokeWidth="1.5" />,
};

function Icon({ name, className = "size-[18px]" }: IconProps) {
  return (
    <svg viewBox="0 0 20 20" aria-hidden="true" className={`${className} shrink-0 overflow-visible`}>
      {icons[name]}
    </svg>
  );
}

function Caret({ className = "text-[#333]" }: { className?: string }) {
  return (
    <svg viewBox="0 0 6 4" aria-hidden="true" className={`h-1 w-1.5 shrink-0 ${className}`}>
      <path d="M0 0 H6 L3 4 Z" fill="currentColor" />
    </svg>
  );
}

function IconButton({ name, label, className = "w-7", icon, children }: { name: string; label: string; className?: string; icon?: string; children?: React.ReactNode }) {
  return (
    <button type="button" aria-label={label} className={`flex h-7 shrink-0 items-center justify-center ${className}`}>
      <Icon name={name} className={icon} />
      {children}
    </button>
  );
}

function CaretButton({ label, className = "w-3.5", tone }: { label: string; className?: string; tone?: string }) {
  return (
    <button type="button" aria-label={label} className={`flex h-7 shrink-0 items-center justify-center ${className}`}>
      <Caret className={tone} />
    </button>
  );
}

function TitleBar() {
  return (
    <header className="flex h-9 shrink-0 items-center border-y border-[#bdbdbd] bg-[#f7f7f7]">
      <div className="flex h-full w-[143px] shrink-0 items-center border-r border-[#bdbdbd] pl-1 text-[#da291c]">
        <svg viewBox="0 0 22 22" className="size-[22px]" fill="none" stroke="currentColor" strokeWidth="1.7" aria-hidden="true">
          <path d="M6.5 2 C11 1.2 11.5 3 8.5 6 C7 7.4 5.5 8.2 4 8.8 C9.5 8.6 11 11 8 15 C6 17.6 4 19 1 19.4 L5.6 11.5" />
          <path d="M21 9.8 C17.5 9 14 10 14.2 12.2 C14.4 14 18.4 14.5 17.2 17 C16.2 19.2 12.5 19.6 9.5 18.6" />
        </svg>
        <span className="ml-1 text-sm leading-4 italic">
          <b className="font-extrabold">SOLID</b><span className="font-light">WORKS</span>
        </span>
        <svg viewBox="0 0 6 10" className="mr-1.5 ml-auto h-2.5 w-1.5" aria-hidden="true">
          <path d="M0 0 L6 5 L0 10 Z" fill="#8a8a8a" />
        </svg>
      </div>
      <nav aria-label="Quick access" className="ml-[22px] flex shrink-0 items-center gap-0.5">
        <IconButton name="home" label="Home" />
        {[
          ["doc", "New"],
          ["open", "Open"],
          ["save", "Save"],
          ["print", "Print"],
          ["undo", "Undo"],
          ["redo", "Redo"],
        ].map(([icon, label]) => (
          <div key={label} className="flex">
            <IconButton name={icon} label={label} />
            <CaretButton label={`${label} options`} />
          </div>
        ))}
        <div className="flex h-[30px] items-center border border-[#8a8a8a] bg-[#fafafa]">
          <IconButton name="cursor" label="Select" className="w-[29px] border-r border-[#8a8a8a] bg-[#b1b1b1]" />
          <CaretButton label="Select options" className="w-3" />
        </div>
        <IconButton name="traffic" label="Rebuild" />
        <IconButton name="list" label="File properties" />
        <div className="flex">
          <IconButton name="gear" label="Options" />
          <CaretButton label="Options menu" />
        </div>
      </nav>
      <h1 className="flex-1 text-center text-[11px] text-black">Main *</h1>
      <label className="flex h-[23px] w-[201px] shrink-0 items-center border border-[#c4c4c4] bg-white pl-1.5">
        <Icon name="prompt" className="size-[14px]" />
        <input aria-label="Search Commands" placeholder="Search Commands" className="ml-1.5 w-[130px] bg-transparent text-[11px] text-[#444] outline-none placeholder:text-[#666]" />
        <Icon name="magnify" className="ml-3.5 size-[14px]" />
        <Caret className="ml-2 text-[#888]" />
      </label>
      <div className="ml-1 flex shrink-0 items-center text-[#444]">
        {[
          ["user", "Account"],
          ["help", "Help"],
          ["min", "Minimize"],
          ["restore", "Restore"],
          ["close", "Close"],
        ].map(([icon, label]) => (
          <IconButton key={icon} name={icon} label={label} className="w-9" />
        ))}
      </div>
      <div className="w-[3px] shrink-0" />
    </header>
  );
}

const toolsA = ["spell", "tape", "scale", "section", "gauge", "lightclock", "cubecheck", "cubetick", "sigma", "zebra", "sym", "thick", "compare", "checkx"];
const toolsB = ["rainbow", "flow", "okring", "squares", "target"];

function ToolBar() {
  return (
    <div className="flex h-8 shrink-0 items-center border-b border-[#bdbdbd] bg-[#f7f7f7]">
      <div className="mr-2 ml-[3px] h-7 w-0.5 border-l-2 border-dotted border-[#aaa]" />
      {toolsA.map((n) => (
        <IconButton key={n} name={n} label={n} className="w-[27px]" />
      ))}
      <CaretButton label="More checks" className="w-[15px]" />
      <IconButton name="xls" label="Design table" className="w-[27px]" />
      <div className="mr-1.5 ml-1 h-6 w-2 border-x border-[#777]" />
      {toolsB.map((n) => (
        <IconButton key={n} name={n} label={n} className="w-[27px]" />
      ))}
      <div className="ml-[7px] h-full border-l border-[#8a8a8a]" />
    </div>
  );
}

function BigTool({ icon, lines, caret, className }: { icon: string; lines: string[]; caret?: boolean; className: string }) {
  return (
    <button type="button" className={`flex shrink-0 flex-col items-center text-center text-[11px] leading-[13px] text-black ${className}`}>
      <Icon name={icon} />
      <span className="h-[27px] pt-px whitespace-nowrap">
        {lines[0]}
        {lines[1] && <br />}
        {lines[1]}
      </span>
      {caret && <span className="mt-3.5"><Caret /></span>}
    </button>
  );
}

function SmallTools({ items, className }: { items: [string, string][]; className: string }) {
  return (
    <div className={`flex shrink-0 flex-col ${className}`}>
      {items.map(([icon, label]) => (
        <button key={label} type="button" className="flex h-[26px] items-center gap-[7px] text-[11px] whitespace-nowrap text-black">
          <Icon name={icon} />
          {label}
        </button>
      ))}
    </div>
  );
}

const Sep = () => <div className="h-[78px] w-px shrink-0 bg-[#c0c0c0]" />;

function Ribbon() {
  return (
    <div className="flex h-[81px] shrink-0 bg-[#f7f7f7] pt-px">
      <BigTool icon="boss" lines={["Extruded", "Boss/Base"]} className="ml-1.5 w-[60px] pt-1.5" />
      <BigTool icon="revolve" lines={["Revolved", "Boss/Base"]} className="w-[60px] pt-1.5" />
      <SmallTools items={[["sweep", "Swept Boss/Base"], ["loft", "Lofted Boss/Base"], ["boundary", "Boundary Boss/Base"]]} className="ml-[3px] w-[138px]" />
      <Sep />
      <BigTool icon="cut" lines={["Extruded", "Cut"]} className="ml-[3px] w-[51px] pt-1.5" />
      <BigTool icon="hole" lines={["Hole", "Wizard"]} caret className="w-[51px] pt-1.5" />
      <BigTool icon="revcut" lines={["Revolved", "Cut"]} className="w-[51px] pt-1.5" />
      <SmallTools items={[["sweepcut", "Swept Cut"], ["loftcut", "Lofted Cut"], ["boundarycut", "Boundary Cut"]]} className="ml-1.5 w-[106px]" />
      <Sep />
      <BigTool icon="fillet" lines={["Fillet"]} caret className="w-[37px] pt-1.5" />
      <BigTool icon="pattern" lines={["Linear", "Pattern"]} caret className="w-11 pt-1.5" />
      <SmallTools items={[["rib", "Rib"], ["draft", "Draft"], ["shell", "Shell"]]} className="ml-[5px] w-16" />
      <SmallTools items={[["wrap", "Wrap"], ["intersect", "Intersect"], ["mirror", "Mirror"]]} className="w-20" />
      <Sep />
      <BigTool icon="refgeo" lines={["Reference", "Geometry"]} caret className="w-[63px] pt-1.5" />
      <BigTool icon="curves" lines={["Curves"]} caret className="mr-0.5 w-[42px] pt-1.5" />
      <Sep />
      <BigTool icon="instant" lines={["Instant3D"]} className="ml-px h-[78px] w-[60px] border border-[#6f6f6f] bg-[#b1b1b1] pt-[5px]" />
      <button type="button" aria-label="Collapse ribbon" className="mr-2 mb-1.5 ml-auto self-end text-[#333]">
        <Icon name="chevbold" className="size-3" />
      </button>
    </div>
  );
}

const tabs: [string, string][] = [
  ["Sketch", "w-14"],
  ["Sketch Ink", "w-[70px]"],
  ["Surfaces", "w-[60px]"],
  ["Sheet Metal", "w-[78px]"],
  ["Structure System", "w-[105px]"],
  ["Weldments", "w-[76px]"],
  ["Mold Tools", "w-[74px]"],
  ["Mesh Modeling", "w-[99px]"],
  ["Data Migration", "w-[95px]"],
  ["Direct Editing", "w-[87px]"],
  ["Markup", "w-[57px]"],
  ["Evaluate", "w-[60px]"],
  ["MBD Dimensions", "w-[107px]"],
  ["SOLIDWORKS Add-Ins", "w-[133px]"],
  ["MBD", "w-14"],
  ["SOLIDWORKS CAM", "w-[121px]"],
  ["SOLIDWORKS CAM TBM", "w-[145px]"],
];

function TabRow() {
  return (
    <div className="relative flex h-[23px] shrink-0">
      <div role="tablist" aria-label="Command manager" className="flex text-[11px] text-[#111]">
        <button type="button" role="tab" aria-selected="true" className="w-16 border-r border-[#8a8a8a] bg-[#f7f7f7] font-semibold text-[#333]">Features</button>
        {tabs.map(([t, w]) => (
          <button key={t} type="button" role="tab" aria-selected="false" className={`border border-l-0 border-[#8a8a8a] bg-[#d4d4d4] whitespace-nowrap ${w}`}>
            {t}
          </button>
        ))}
      </div>
      <div className="flex-1 border-t border-[#8a8a8a]" />
      <div className="absolute top-0.5 right-1.5 flex text-[#a2a2a2]">
        {[
          ["paneleft", "Previous pane"],
          ["paneright", "Next pane"],
          ["min", "Minimize document"],
          ["restore", "Restore document"],
          ["close", "Close document"],
        ].map(([icon, label]) => (
          <IconButton key={icon} name={icon} label={label} className="w-[26px]" />
        ))}
      </div>
    </div>
  );
}

const tree: [string, string, boolean][] = [
  ["history", "History", true],
  ["sensors", "Sensors", false],
  ["annot", "Annotations", true],
  ["solid", "Solid Bodies(1)", true],
  ["material", "Material <not specified>", false],
  ["plane", "Front Plane", false],
  ["plane", "Top Plane", false],
  ["plane", "Right Plane", false],
  ["origin", "Origin", false],
  ["boss", "Boss-Extrude1", true],
  ["cut", "Cut-Extrude1", true],
  ["mirrorfeat", "Mirror1", false],
  ["cut", "Cut-Extrude3", true],
  ["fillet", "Fillet4", false],
  ["cut", "Cut-Extrude4", true],
  ["plane", "Plane1", false],
  ["boss", "Boss-Extrude2", true],
  ["mirrorfeat", "Mirror2", false],
  ["fillet", "Fillet5", false],
  ["fillet", "Fillet6", false],
  ["fillet", "Fillet7", false],
  ["fillet", "Fillet8", false],
  ["fillet", "Fillet9", false],
  ["fillet", "Fillet10", false],
  ["fillet", "Fillet11", false],
  ["fillet", "Fillet12", false],
  ["boss", "Boss-Extrude3", true],
  ["fillet", "Fillet13", false],
  ["boss", "Boss-Extrude5", true],
  ["cut", "Cut-Extrude5", true],
  ["fillet", "Fillet14", false],
  ["fillet", "Fillet15", false],
  ["boss", "Boss-Extrude6", true],
];

function Sidebar() {
  return (
    <aside className="relative flex w-[230px] shrink-0 flex-col border-r border-[#8a8a8a] bg-[#f7f7f7]">
      <div className="mt-1 mr-0.5 flex h-4 shrink-0 items-center justify-center border-y border-[#bdbdbd]">
        <span className="size-1.5 rounded-full border border-[#999] bg-[#ccc]" />
      </div>
      <div role="tablist" aria-label="Manager panes" className="mt-1 mr-0.5 flex h-[26px] shrink-0 overflow-hidden border-t border-[#777]">
        {[
          ["part", "Feature tree"],
          ["proplist", "Properties"],
          ["config", "Configurations"],
          ["dim", "Dimensions"],
          ["appear", "Appearances"],
        ].map(([icon, label], i) => (
          <button
            key={icon}
            type="button"
            role="tab"
            aria-label={label}
            aria-selected={i === 0}
            className={`flex shrink-0 items-center justify-center border-r border-[#8a8a8a] ${i === 0 ? "w-[42px] bg-[#f7f7f7] pl-1" : i === 4 ? "w-[30px] border-b bg-[#d4d4d4] pl-2" : "w-10 border-b bg-[#d4d4d4]"}`}
          >
            <Icon name={icon} />
          </button>
        ))}
        <div className="mt-1.5 flex flex-1 border-b border-[#8a8a8a] bg-white">
          <button type="button" aria-label="Scroll tabs left" className="flex flex-1 items-center justify-center border-t border-r border-[#8a8a8a]">
            <Caret className="rotate-90 text-black" />
          </button>
          <button type="button" aria-label="Scroll tabs right" className="flex flex-1 items-center justify-center border-t border-[#8a8a8a]">
            <Caret className="-rotate-90 text-black" />
          </button>
        </div>
      </div>
      <label className="mr-1 ml-[5px] flex h-[26px] shrink-0 items-center border border-[#bdbdbd] pl-px">
        <Icon name="filter" />
        <input aria-label="Filter tree" className="min-w-0 flex-1 bg-transparent px-1 text-[11px] outline-none" />
      </label>
      <div className="flex min-h-0 flex-1">
        <div className="min-h-0 min-w-0 flex-1 overflow-hidden border-l border-[#c8c8c8] text-[11px] text-black">
          <div className="flex h-[23px] items-center gap-1 pl-1 whitespace-nowrap">
            <Icon name="part" />
            Main (Default) &lt;&lt;Default&gt;_Display
          </div>
          <ul>
            {tree.map(([icon, label, expandable]) => (
              <li key={label} className="flex h-[22px] items-center whitespace-nowrap">
                <span className="flex w-[26px] shrink-0 pl-[9px]">
                  {expandable && (
                    <svg viewBox="0 0 4 7" className="h-[7px] w-1" aria-hidden="true">
                      <path d="M0 0 L4 3.5 L0 7 Z" fill="#555" />
                    </svg>
                  )}
                </span>
                <Icon name={icon} />
                <span className="ml-[5px]">{label}</span>
              </li>
            ))}
          </ul>
        </div>
        <div className="mr-0.5 flex w-[15px] shrink-0 flex-col items-center bg-[#f0f0f0] text-[#444]">
          <Icon name="chevbold" className="my-0.5 size-3" />
          <div className="w-full flex-[527] bg-[#cdcdcd]" />
          <div className="flex-[178]" />
          <Icon name="chevbold" className="my-0.5 size-3 rotate-180" />
        </div>
      </div>
      <div className="mr-[18px] flex h-4 shrink-0 items-center bg-[#f0f0f0] text-[#444]">
        <Icon name="chevbold" className="mx-[3px] size-3 -rotate-90" />
        <div className="h-full flex-[142] bg-[#cdcdcd]" />
        <div className="flex-[34]" />
        <Icon name="chevbold" className="mx-[3px] size-3 rotate-90" />
      </div>
      <div className="mt-0.5 h-[3px] shrink-0 border-t border-[#bdbdbd]" />
      <button type="button" aria-label="Collapse panel" className="absolute top-[386px] -right-[9px] flex h-10 w-[9px] items-center justify-center border border-l-0 border-[#8a8a8a] bg-[#f7f7f7]">
        <span className="size-1.5 rounded-full border border-[#999] bg-[#ccc]" />
      </button>
    </aside>
  );
}

function Wheel({ x, y, id }: { x: number; y: number; id: string }) {
  const outline = "M40,-205 C85,-198 118,-120 118,-30 C118,90 60,207 -35,207 C-90,205 -120,110 -118,10 C-114,-110 -50,-210 40,-205 Z";
  return (
    <g transform={`translate(${x} ${y})`}>
      <clipPath id={id}>
        <path d={outline} />
      </clipPath>
      <path d={outline} fill="url(#tyre)" />
      <g clipPath={`url(#${id})`} fill="none">
        {Array.from({ length: 24 }, (_, i) => (
          <path
            key={i}
            d={`M-125,${-90 + i * 13 + (i % 4) * 4} C-80,${-140 + i * 14 + (i % 3) * 7} 10,${-130 + i * 13 + (i % 5) * 4} 120,${-60 + i * 9 + (i % 2) * 12}`}
            stroke={i % 4 === 0 ? "#403c39" : "#1f1e1d"}
            strokeWidth={i % 3 === 0 ? 4 : 2}
            opacity="0.8"
          />
        ))}
        {Array.from({ length: 8 }, (_, i) => (
          <ellipse key={i} cx={34 - i * 2} cy={-165} rx={12 + i * 13} ry={6 + i * 11 + (i % 2) * 3} stroke={i % 3 ? "#1d1c1b" : "#45413e"} strokeWidth="2" opacity="0.8" />
        ))}
      </g>
      <path d={outline} fill="none" stroke="#000" strokeWidth="2.4" />
      <g transform="translate(43 41)">
        <path d="M22,-99 C46,-96 54,-60 52,-22 C50,40 20,98 -20,99 C-45,98 -55,55 -51,10 C-46,-50 -20,-100 22,-99 Z" fill="#7d7772" stroke="#000" strokeWidth="2" />
        <path d="M10,-51 C24,-50 28,-30 27,-10 C25,25 10,51 -9,50 C-24,48 -28,25 -26,3 C-23,-25 -8,-52 10,-51 Z" fill="url(#hub)" stroke="#000" strokeWidth="2" />
      </g>
    </g>
  );
}

function Headlight({ x, y }: { x: number; y: number }) {
  return (
    <g transform={`translate(${x} ${y})`}>
      <path d="M-32,-112 C10,-118 45,-60 54,0 C62,60 58,108 32,112 C-5,116 -45,60 -54,0 C-62,-55 -58,-105 -32,-112 Z" fill="#020202" />
      <path d="M-24,-54 C0,-55 15,-15 16,20 C17,50 10,57 2,56 C-20,54 -38,15 -42,-15 C-44,-40 -38,-54 -24,-54 Z" fill="url(#lamp)" stroke="#000" strokeWidth="2" />
      <path d="M-8,-24 C0,-26 6,-12 6,0 C6,8 0,6 -3,6 C-8,8 -13,4 -12,-2 Z" fill="#ffff00" stroke="#222" strokeWidth="1" />
    </g>
  );
}

/* The model lives in its own coordinate space, mapped to the canvas by the outer group. */
function CarModel() {
  return (
    <svg viewBox="0 149 1920 857" preserveAspectRatio="xMidYMid slice" role="img" aria-label="Car model, isometric view" className="absolute inset-0 h-full w-full">
      <defs>
        <filter id="soft" x="-20%" y="-20%" width="140%" height="140%">
          <feGaussianBlur stdDeviation="22 34" />
        </filter>
        <filter id="soft2" x="-40%" y="-40%" width="180%" height="180%">
          <feGaussianBlur stdDeviation="12 20" />
        </filter>
        <linearGradient id="tyre" x1="0.2" y1="0" x2="0.6" y2="1">
          <stop offset="0" stopColor="#3c3835" />
          <stop offset="0.5" stopColor="#2f2c2a" />
          <stop offset="1" stopColor="#1a1918" />
        </linearGradient>
        <radialGradient id="hub" cx="0.4" cy="0.75" r="0.8">
          <stop offset="0" stopColor="#b5b0ab" />
          <stop offset="1" stopColor="#5b5754" />
        </radialGradient>
        <linearGradient id="lamp" x1="0" y1="0" x2="1" y2="0.3">
          <stop offset="0" stopColor="#3e3c3a" />
          <stop offset="0.6" stopColor="#6e6b68" />
          <stop offset="1" stopColor="#a4a09c" />
        </linearGradient>
        <linearGradient id="corner" x1="0" y1="0" x2="1" y2="0">
          <stop offset="0" stopColor="#b6b8bc" />
          <stop offset="0.5" stopColor="#c7c7cb" />
          <stop offset="1" stopColor="#c9cacd" />
        </linearGradient>
        <linearGradient id="fender" gradientUnits="userSpaceOnUse" x1="590" y1="385" x2="680" y2="520">
          <stop offset="0" stopColor="#00b400" />
          <stop offset="0.28" stopColor="#1cdc1c" />
          <stop offset="0.5" stopColor="#00c000" />
          <stop offset="1" stopColor="#00a800" />
        </linearGradient>
        <linearGradient id="rearFade" gradientUnits="userSpaceOnUse" x1="750" y1="330" x2="1000" y2="130">
          <stop offset="0" stopColor="#00b400" stopOpacity="0" />
          <stop offset="1" stopColor="#00b200" />
        </linearGradient>
        <linearGradient id="fenderL" gradientUnits="userSpaceOnUse" x1="190" y1="120" x2="260" y2="215">
          <stop offset="0" stopColor="#00a800" />
          <stop offset="0.45" stopColor="#22de22" />
          <stop offset="1" stopColor="#00ae00" />
        </linearGradient>
        <linearGradient id="sideRoof" gradientUnits="userSpaceOnUse" x1="930" y1="-360" x2="1010" y2="-240">
          <stop offset="0" stopColor="#080808" />
          <stop offset="0.3" stopColor="#111" />
          <stop offset="1" stopColor="#000" />
        </linearGradient>
        <radialGradient id="glow">
          <stop offset="0" stopColor="#191919" />
          <stop offset="1" stopColor="#191919" stopOpacity="0" />
        </radialGradient>
        <linearGradient id="bumperEnd" x1="0" y1="0" x2="1" y2="1">
          <stop offset="0" stopColor="#b4b0ad" />
          <stop offset="1" stopColor="#5f5c5a" />
        </linearGradient>
        <linearGradient id="arch" gradientUnits="userSpaceOnUse" x1="600" y1="480" x2="720" y2="900">
          <stop offset="0" stopColor="#00b200" />
          <stop offset="1" stopColor="#008c00" />
        </linearGradient>
        <linearGradient id="front" x1="0" y1="0" x2="1" y2="0">
          <stop offset="0" stopColor="#008400" />
          <stop offset="0.5" stopColor="#006400" />
          <stop offset="1" stopColor="#007400" />
        </linearGradient>
      </defs>
      <g transform="translate(700 560) scale(.4847 .3333)">
        <path d="M70,660 L520,1070 L700,990 L860,920 L970,730 L1200,610 L1350,530 L1440,420 L1300,300 L700,500 L100,560 Z" fill="#222" opacity="0.55" filter="url(#soft)" />
        <path d="M80,650 L530,1045 L700,950 L820,930 L920,800 L960,710 L1230,530 L1320,490 L1410,390 L1000,300 L500,500 Z" fill="#222" opacity="0.45" filter="url(#soft2)" />

        <g stroke="#001a00" strokeWidth="2.4" strokeLinejoin="round">
          <path d="M118,182 L428,-80 L1245,-255 L1412,-113 Q1424,-105 1425,-80 L1436,50 L1447,175 Q1465,182 1466,195 L1466,215 L1448,232 L1220,425 L548,990 Q536,997 525,990 L310,807 L310,790 L325,770 L318,765 Q300,760 288,765 L272,776 L53,592 L53,570 L85,540 L94,310 L92,215 Z" fill="#00a800" />

          <path d="M1410,-113 L1425,-90 L1436,50 L1447,160 C1430,60 1400,36 1372,35 C1330,34 1280,90 1245,155 L1188,75 C1250,0 1340,-90 1410,-113 Z" fill="#00ab00" />
          <path d="M1447,165 Q1465,180 1466,195 L1466,215 L1448,232 Z" fill="#0ab40f" />
          <path d="M1406,-108 C1388,-60 1384,-10 1389,37" fill="none" />
          <path d="M1188,75 L1245,155 C1200,230 1190,340 1205,415 C1160,380 1120,330 1108,290 C1115,210 1145,130 1188,75 Z" fill="#00a200" />
          <path d="M870,340 L1188,75 C1145,130 1115,210 1108,290 L938,433 C925,385 900,350 870,340 Z" fill="#009800" />
          <path d="M938,433 L1108,290 C1120,330 1160,380 1205,415 L1220,428 L915,680 L908,580 C915,520 925,470 938,433 Z" fill="#00ae00" />
          <path d="M915,662 L1208,418" fill="none" />
          <path d="M870,340 C900,350 925,385 938,433 C925,470 912,520 906,585 C895,530 870,490 853,485 C850,430 857,380 870,340 Z" fill="#00a000" />
          <path d="M652,523 C720,440 790,370 870,340 C857,380 850,430 853,485 C800,475 750,530 712,603 Z" fill="#00aa00" />
          <path d="M652,523 L712,603 C670,690 650,800 670,865 C640,868 600,878 562,905 C555,760 590,620 652,523 Z" fill="url(#arch)" />
          <path d="M540,615 L652,523 C590,620 555,760 562,905 L508,950 C530,850 540,740 540,615 Z" fill="#009a00" />
          <path d="M508,950 L562,905 C600,878 640,866 670,865 L686,872 L548,970 Q536,978 525,968 Z" fill="#0cc814" />
          <path d="M525,968 Q536,978 548,970 L548,990 Q536,997 525,990 Z" fill="#00a208" />

          <path d="M486,470 L745,252 L770,243 L835,245 L858,230 L1057,60 L1332,-168 L1410,-113 C1340,-90 1250,0 1188,75 L870,340 C790,370 720,440 652,523 L540,615 C535,540 520,490 486,470 Z" fill="url(#fender)" />
          <path d="M760,243 L835,245 L858,230 L1057,60 L1332,-168 L1410,-113 C1340,-90 1250,0 1188,75 L870,340 L740,420 Z" fill="url(#rearFade)" stroke="none" />
          <path d="M1410,-113 C1340,-90 1250,0 1188,75 L870,340" fill="none" />
          <path d="M460,463 L680,300 L745,252 L486,472 Z" fill="#00a000" />
          <path d="M118,182 L428,-80 L424,-38 L150,188 Z" fill="#00b000" />
          <path d="M150,188 L415,-30 L400,0 L345,27 C300,90 250,200 206,345 C205,260 185,205 150,188 Z" fill="url(#fenderL)" />
          <path d="M1245,-255 L1260,-240 L1412,-113 L1332,-160 L1290,-200 Z" fill="#00b400" />

          <path d="M94,310 L120,380 L205,350 L432,530 L450,640 L510,686 L538,670 C535,780 525,860 508,950 L78,594 C88,500 92,400 94,310 Z" fill="url(#front)" />
          <path d="M200,385 L308,477 L306,520 M324,488 L430,580 M324,488 L326,545 M312,480 L318,535" fill="none" />
          <path d="M137,515 L125,630 M147,540 L147,615 M445,765 L476,790 L462,912" fill="none" />
          <path d="M125,630 L147,613 L305,745 L285,750 L270,757 Z" fill="#0cc40f" />
          <path d="M310,790 L328,768 L465,880 L460,914 Z" fill="#0cc40f" />
          <path d="M53,570 L85,540 L80,594 Z" fill="#0cc40f" />
          <path d="M53,570 L272,757 L272,776 L53,592 Z" fill="#00980a" />
          <path d="M310,790 L525,968 L525,990 L310,807 Z" fill="#00980a" />
          <path d="M272,757 Q290,740 306,747 L306,762 Q288,760 272,776 Z" fill="#00980a" />
        </g>

        <path d="M412,-25 L456,12 L700,215 L742,255 L680,310 C600,345 490,420 440,470 L425,530 L208,352 C245,190 290,90 345,27 C380,15 400,-5 412,-25 Z" fill="#030303" />

        <path d="M488,-312 L428,-80 Q422,-40 430,-15 L456,12 L700,215 C740,243 800,248 835,243 L856,231 L1057,60 L1332,-168 L1187,-262 L1172,-300 L800,-400 Z" fill="#c7c8cc" stroke="#000" strokeWidth="1.8" />
        <path d="M521,-245 L456,12 L700,215 L720,-78 Z" fill="#b7b9be" stroke="#000" strokeWidth="1.8" />
        <path d="M720,-78 L695,212 C740,243 800,248 835,243 L855,230 L879,-52 Z" fill="url(#corner)" stroke="#000" strokeWidth="1.8" />
        <path d="M494,-145 L458,8" stroke="#006400" strokeWidth="2.4" />
        <path d="M1204,-405 L1245,-280 L1188,-262 L1172,-300 Z" fill="#cfd0d5" stroke="#000" strokeWidth="1.6" />
        <path d="M1187,-263 L1222,-282 Q1240,-286 1245,-275 L1260,-240 L1298,-193 Z" fill="#000" />
        <path d="M1172,-298 L1187,-262 L1332,-168" fill="none" stroke="#c02020" strokeWidth="2" strokeDasharray="5 4" />
        <path d="M1015,-165 L1032,-182 L1050,62 L1037,80 Z" fill="#040404" />
        <path d="M1030,-180 L1040,-185 L1057,60 L1046,60 Z" fill="#007a00" stroke="#001a00" strokeWidth="2" />
        <path d="M1036,72 L1050,57 L1057,62 L1038,80 Z" fill="#00a000" />
        <path d="M442,5 L700,218 C740,246 800,251 837,245 L858,232 L1057,62 L1332,-166" fill="none" stroke="#002a00" strokeWidth="2.6" />

        <path d="M488,-312 C492,-365 515,-400 555,-425 L850,-675 C875,-690 915,-690 940,-675 L1145,-500 C1185,-470 1200,-430 1204,-390 C1203,-350 1190,-320 1172,-298 L880,-53 C840,-45 770,-45 722,-76 L520,-245 C500,-265 490,-290 488,-312 Z" fill="#030303" />
        <path d="M800,-238 L1097,-487 C1140,-450 1165,-370 1172,-298 L880,-53 C880,-120 850,-200 800,-238 Z" fill="url(#sideRoof)" />
        <path d="M598,-405 L895,-653 L1097,-487 L800,-238 Z" fill="#080808" />
        <ellipse cx="830" cy="-130" rx="34" ry="65" fill="url(#glow)" />
        <ellipse cx="545" cy="-372" rx="28" ry="38" fill="url(#glow)" />
        <ellipse cx="1125" cy="-475" rx="30" ry="30" fill="url(#glow)" />
        <path d="M555,-425 Q580,-422 598,-405 L800,-238 C850,-200 880,-120 880,-53 M800,-238 C760,-200 722,-140 722,-76 M598,-405 L895,-653 L1097,-487 L800,-238 M598,-405 C560,-370 530,-310 520,-245 M1097,-487 C1140,-450 1165,-370 1172,-298 M850,-675 L895,-653 L940,-675 M1097,-487 L1145,-500" fill="none" stroke="#000" strokeWidth="2.4" />

        <path d="M712,603 C750,520 800,480 840,484 C875,490 900,540 906,610" fill="none" stroke="#001a00" strokeWidth="2.4" />
        <path d="M670,865 C655,760 670,660 718,595 C760,510 820,490 860,512 L780,900 L686,872 Z" fill="#008c00" />
        <path d="M1206,415 C1190,320 1200,230 1250,150 C1290,80 1350,30 1400,65 L1300,420 L1220,425 Z" fill="#008c00" />
        <Wheel x={795} y={710} id="wheelF" />
        <Wheel x={1328} y={263} id="wheelR" />

        <g stroke="#111" strokeWidth="2" strokeLinejoin="round">
          <path d="M127,460 Q128,436 150,435 L425,665 C445,685 455,715 452,745 C448,770 432,773 405,765 L180,578 C145,545 126,500 127,460 Z" fill="#4e4c4b" />
          <path d="M145,435 L168,415 L180,415 L448,640 L425,665 Z" fill="#a4a19e" />
          <path d="M425,665 L448,640 C476,668 480,710 472,742 L440,769 C458,745 455,695 425,665 Z" fill="url(#bumperEnd)" />
        </g>
        <Headlight x={150} y={292} />
        <Headlight x={484} y={574} />
        <g stroke="#111" strokeWidth="1.4">
          <ellipse cx="200" cy="606" rx="9" ry="19" fill="#00a000" />
          <ellipse cx="188" cy="610" rx="12" ry="20" fill="#ffff00" />
          <path d="M181,624 V612 Q182,604 188,604 Q194,606 193,624" fill="none" />
          <ellipse cx="432" cy="798" rx="10" ry="20" fill="#00a000" />
          <path d="M410,790 Q416,780 424,786 Q432,798 430,820 Q418,826 411,814 Z" fill="#ffff00" />
        </g>
      </g>
    </svg>
  );
}

function Triad() {
  return (
    <svg viewBox="0 0 64 56" className="h-14 w-16" role="img" aria-label="Axis triad">
      <path d="M31 37 V20" stroke="#2f9a3a" strokeWidth="3" />
      <path d="M31 37 L46 44" stroke="#a80d0d" strokeWidth="3" />
      <path d="M31 37 L17 44" stroke="#0808b0" strokeWidth="3" />
      <path d="M31 13 L35 20 L31 22 L27 20 Z" fill="#0b6b18" />
      <path d="M52 48 L43 47 L45 41 Z" fill="#a80d0d" />
      <path d="M10 48 L19 47 L17 41 Z" fill="#0808b0" />
      <g fontFamily="Liberation Sans, sans-serif" fontSize="8" textAnchor="middle" strokeWidth="0.3">
        <text x="31" y="7" fill="#1c8a2c">Y</text>
        <text x="57" y="51" fill="#e33" stroke="#e33">X</text>
        <text x="6" y="51" fill="#33c" stroke="#33c">Z</text>
      </g>
    </svg>
  );
}

function Hud() {
  const caret = <CaretButton label="View options" className="w-3" tone="text-[#999]" />;
  return (
    <div className="flex items-center justify-center pr-2">
      {["zoomfit", "zoomarea", "prev", "sectionview", "annotview", "orient"].map((n) => (
        <IconButton key={n} name={n} label={n} className="w-[26px]" />
      ))}
      {caret}
      <IconButton name="display" label="Display style" />
      {caret}
      <IconButton name="eye" label="Hide or show items" />
      {caret}
      <IconButton name="editapp" label="Edit appearance" className="w-[26px]" />
      <IconButton name="scene" label="Apply scene" className="w-[26px]" />
      {caret}
      <IconButton name="monitor" label="View settings" />
      {caret}
    </div>
  );
}

function Workspace() {
  return (
    <main className="relative flex min-h-0 flex-1 flex-col bg-[radial-gradient(ellipse_62%_64%_at_18%_0%,#ffffff_0%,#ffffff_45%,rgba(255,255,255,0)_100%),radial-gradient(ellipse_22%_30%_at_100%_0%,#f0f0f4_0%,rgba(240,240,244,0)_100%),linear-gradient(to_bottom,rgba(255,255,255,0)_0%,rgba(255,255,255,0)_54%,#fafbfd_67%,#ffffff_78%,#fcfcfe_100%),linear-gradient(to_right,#e3e6ef_0%,#e0e4ee_40%,#dadfea_75%,#dfe2ec_100%)]">
      <CarModel />
      <TabRow />
      <div className="relative flex min-h-0 flex-1">
        <Sidebar />
        <section aria-label="Model view" className="relative flex min-w-0 flex-1 flex-col justify-between pt-px">
          <Hud />
          <div className="pl-2.5">
            <Triad />
            <p className="mt-4 pl-px font-['Noto_Sans'] text-xs leading-5 font-bold text-[#111]">*Isometric</p>
          </div>
          <nav aria-label="Task pane" className="absolute top-7 right-0 flex w-[26px] flex-col border-t border-l border-[#8a8a8a]">
            {["home", "library", "explorer", "palette", "appear", "proplist"].map((n, i) => (
              <button key={n} type="button" aria-label={n} className={`flex h-6 items-center justify-center border-b border-[#8a8a8a] ${i === 0 ? "bg-[#f7f7f7]" : "bg-[#d4d4d4]"}`}>
                <Icon name={n} />
              </button>
            ))}
          </nav>
        </section>
      </div>
    </main>
  );
}

function BottomTabs() {
  return (
    <div className="flex h-4 shrink-0 border-y border-[#7d7d7d] bg-[#f7f7f7] text-[11px] leading-3 text-black">
      <div className="flex w-[67px] gap-px border-r border-[#666] bg-[#9a9a9a] pl-1.5">
        {["M3 2 V12 M11 2 L6 7 L11 12 Z", "M10 2 L4 7 L10 12 Z", "M4 2 L10 7 L4 12 Z", "M3 2 L8 7 L3 12 Z M11 2 V12"].map((d) => (
          <button key={d} type="button" aria-label="Scroll sheets" className="flex flex-1 items-center justify-center bg-[#a9abae]">
            <svg viewBox="0 0 14 14" className="size-3" aria-hidden="true">
              <path d={d} fill="#808080" stroke="#808080" />
            </svg>
          </button>
        ))}
      </div>
      <button type="button" className="flex w-[57px] justify-center border-r border-[#8a8a8a] font-bold">Model</button>
      <button type="button" className="flex w-[68px] justify-center border-r border-[#8a8a8a] bg-[#d4d4d4]">3D Views</button>
      <button type="button" className="flex w-[108px] border-r border-[#8a8a8a] bg-[#d4d4d4] pl-[9px]">Motion Study 1</button>
    </div>
  );
}

function StatusBar() {
  return (
    <footer className="flex h-[18px] shrink-0 items-center bg-[#f7f7f7] pr-px text-[11px] text-black">
      <span className="pl-px">SOLIDWORKS Premium 2022 SP1.0</span>
      <span className="ml-auto">Editing Part</span>
      <span className="ml-[118px]">MMGS</span>
      <Caret className="mr-7 ml-[18px] rotate-180" />
      <Icon name="tag" />
    </footer>
  );
}

function Mask() {
  const dots: [number, number, string][] = [
    [4, 6, "#3ecf5a"], [14, 8, "#e8b62c"], [30, 3, "#a050d8"], [40, 10, "#e8b62c"], [50, 6, "#3ecf5a"], [74, 6, "#a050d8"],
    [73, 12, "#e8b62c"], [80, 22, "#a050d8"], [76, 30, "#3ecf5a"], [69, 28, "#e8b62c"], [5, 32, "#e8b62c"], [5, 37, "#3ecf5a"],
    [14, 37, "#e8b62c"], [20, 34, "#a050d8"], [50, 37, "#a050d8"], [55, 37, "#e8b62c"], [66, 36, "#3ecf5a"], [76, 37, "#a050d8"], [8, 14, "#a050d8"],
  ];
  return (
    <svg viewBox="0 0 84 40" className="h-10 w-[84px] shrink-0" aria-hidden="true">
      {dots.map(([x, y, c]) => (
        <circle key={`${x}-${y}`} cx={x} cy={y} r="1.7" fill={c} />
      ))}
      <path d="M18 10 C28 4 36 10 38 18 L26 26 C18 26 12 26 8 30 C10 24 12 22 16 20 Z" fill="#7a2fb8" />
      <path d="M6 20 C12 10 26 10 30 18 L26 28 C22 22 14 20 6 20 Z" fill="#f0b21c" />
      <path d="M24 20 C34 20 46 18 52 12 C58 8 66 8 71 5 C72 16 70 26 62 30 C54 32 52 26 50 28 C48 36 40 38 34 36 C26 34 24 26 24 20 Z" fill="#45a82c" />
      <path d="M29 27 C32 23 40 24 43 28 C40 32 32 33 29 27 Z M52 20 C56 15 62 15 65 16 C64 22 56 25 52 20 Z" fill="#2b2b2b" />
    </svg>
  );
}

const apps: [string, string, string][] = [
  ["taskview", "Task View", ""],
  ["folderTask", "File Explorer", "bar"],
  ["chrome", "Chrome", ""],
  ["messenger", "Messenger", ""],
  ["whatsapp", "WhatsApp", "badge"],
  ["opera", "Opera", ""],
  ["xapp", "X app", ""],
  ["telegram", "Telegram", ""],
  ["clip", "Clip editor", ""],
  ["brave", "Brave", ""],
  ["qb", "qBittorrent", ""],
  ["chrome", "Chrome window", "bar"],
  ["sw", "SOLIDWORKS 2022", "active"],
];

function Taskbar() {
  return (
    <div className="flex h-10 shrink-0 items-stretch bg-[linear-gradient(to_right,#1c1f20,#1e2123_60%,#24201f_85%,#38211c_96%,#2e2320)] text-white">
      <button type="button" aria-label="Start" className="flex w-12 shrink-0 items-center justify-center">
        <Icon name="windows" className="size-[17px]" />
      </button>
      <label className="flex w-72 shrink-0 items-center overflow-hidden border border-[#5a5a5a] bg-[#343434] pl-2.5 text-[#eee]">
        <Icon name="search" />
        <input aria-label="Type here to search" placeholder="Type here to search" className="ml-[11px] w-[168px] shrink-0 bg-transparent text-sm outline-none placeholder:text-[#d8d8d8]" />
        <Mask />
      </label>
      <div className="flex shrink-0">
        {apps.map(([icon, label, state]) => (
          <button
            key={label}
            type="button"
            aria-label={label}
            className={`relative flex w-[49px] items-center justify-center ${state === "active" ? "bg-[#4b4d4d]" : ""}`}
          >
            <Icon name={icon} className={icon === "taskview" ? "size-4" : "size-6"} />
            {state === "badge" && (
              <span className="absolute top-5 right-0.5 flex size-4 items-center justify-center rounded-full border border-[#888] bg-[#222] text-[11px] leading-none font-semibold">5</span>
            )}
            {(state === "bar" || state === "active") && <span className={`absolute bottom-0 h-0.5 bg-[#76b9ed] ${state === "bar" ? "inset-x-1" : "inset-x-0"}`} />}
          </button>
        ))}
      </div>
      <div className="ml-auto flex shrink-0 items-center text-[11px] leading-4">
        <p className="w-20">↑: 0.79 KB/s<br />↓: 0.61 KB/s</p>
        <p className="w-[70px]">CPU: 8 %<br />MEM: 48 %</p>
        <p className="w-[50px] text-center">↑↓:<br />1.39 KB/s</p>
      </div>
      <button type="button" className="ml-[86px] flex shrink-0 items-center gap-2 text-sm">
        <Icon name="cloud" className="size-6" />
        <span className="w-[98px] text-left text-[13px] whitespace-pre">81°F  Cloudy</span>
      </button>
      <div className="flex shrink-0 items-center">
        <IconButton name="chevup" label="Hidden icons" className="w-6" icon="size-3.5" />
        <IconButton name="meet" label="Meet now" className="w-6" icon="size-4" />
        <IconButton name="wifi" label="Network" className="w-6" icon="size-[15px]" />
        <IconButton name="speaker" label="Volume" className="w-6" icon="size-4" />
      </div>
      <p className="w-16 shrink-0 self-center text-center text-[11px] leading-[18px]">5:06 PM<br />2/13/2024</p>
      <IconButton name="notify" label="Notifications" className="w-11 self-center" />
      <div className="w-[9px] shrink-0" />
    </div>
  );
}

export default function App() {
  return (
    <div className="flex h-screen flex-col overflow-hidden bg-[#f7f7f7] font-['Open_Sans','Noto_Sans',sans-serif]">
      <TitleBar />
      <ToolBar />
      <Ribbon />
      <Workspace />
      <BottomTabs />
      <StatusBar />
      <Taskbar />
    </div>
  );
}
